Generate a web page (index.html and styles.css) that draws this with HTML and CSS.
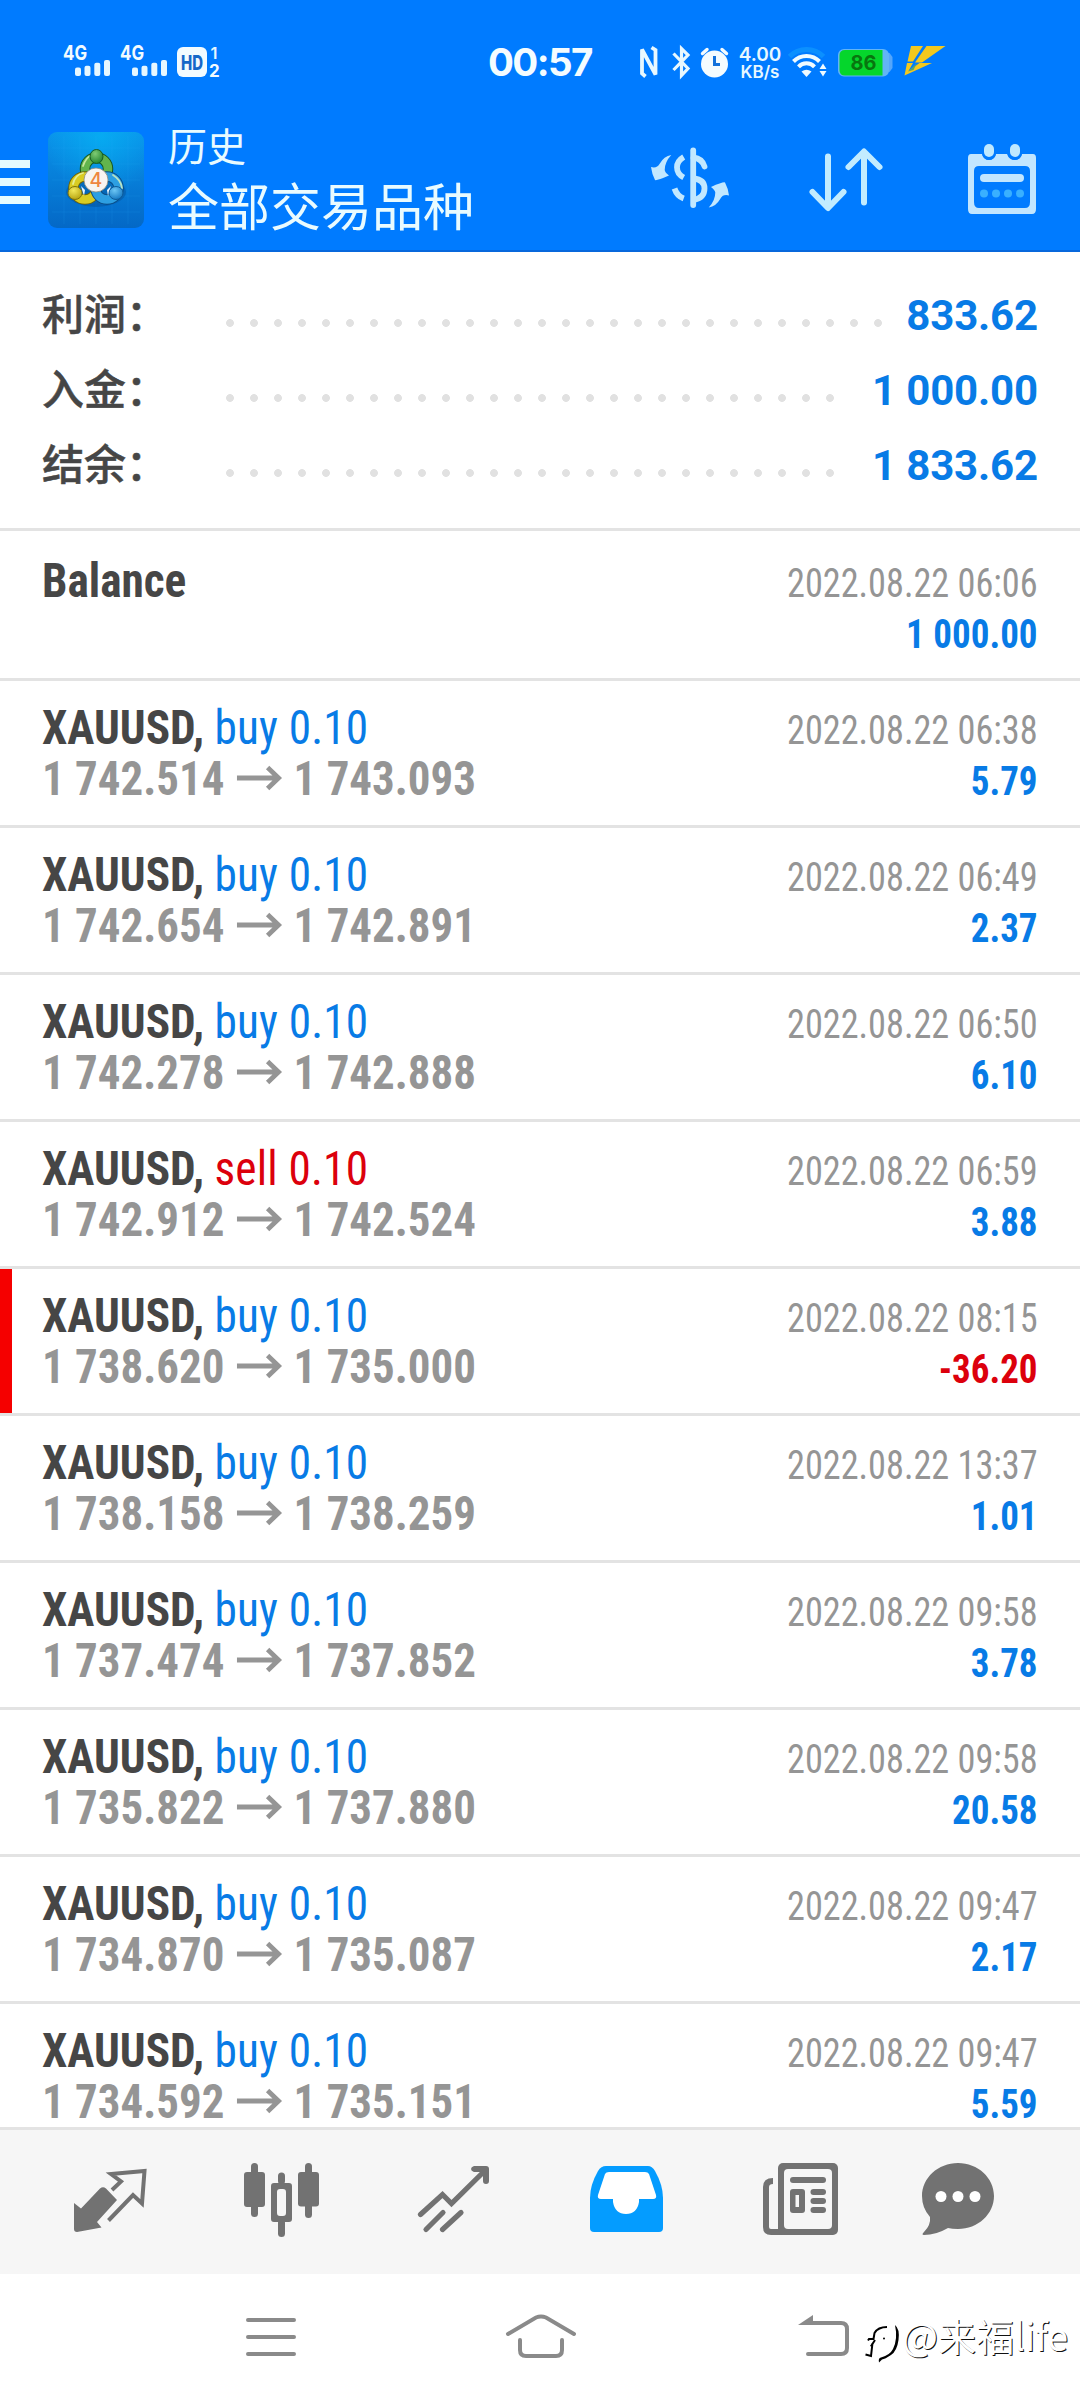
FILE: index.html
```html
<!DOCTYPE html>
<html lang="zh-CN">
<head>
<meta charset="utf-8">
<title>历史</title>
<link rel="stylesheet" href="styles.css">
</head>
<body>
<svg width="0" height="0" class="defs">
  <defs>
    <symbol id="arrow" viewBox="0 0 46 26" preserveAspectRatio="none"><path d="M0 13H43M31 2.500L42 13L31 23.500" fill="none" stroke="#959595" stroke-width="4.8"/></symbol>
    <symbol id="signal" viewBox="0 0 48 36">
      <text x="0" y="16" font-family="Inter, sans-serif" font-weight="700" font-size="20.5" textLength="24" lengthAdjust="spacingAndGlyphs" fill="#f2fbff">4G</text>
      <g fill="#e6f7ff"><rect x="12" y="23.5" width="6" height="8.5" rx="2"/><rect x="21.5" y="21.700" width="6" height="10.300" rx="2"/><rect x="31.300" y="18.700" width="6" height="13.300" rx="2"/><rect x="41" y="16" width="6" height="16" rx="2"/></g>
    </symbol>
    <linearGradient id="logoBg" x1="0" y1="0" x2="0" y2="1"><stop offset="0" stop-color="#0a93ea"/><stop offset="1" stop-color="#0468c6"/></linearGradient>
    <radialGradient id="logoGlow" cx=".55" cy=".05" r=".6"><stop offset="0" stop-color="#05b8f6" stop-opacity=".65"/><stop offset="1" stop-color="#05b8f6" stop-opacity="0"/></radialGradient>
    <radialGradient id="gGreen" cx=".4" cy=".3" r=".8"><stop offset="0" stop-color="#7fcb74"/><stop offset="1" stop-color="#187c28"/></radialGradient>
    <radialGradient id="gYellow" cx=".4" cy=".3" r=".8"><stop offset="0" stop-color="#f2e85a"/><stop offset="1" stop-color="#b09c08"/></radialGradient>
    <radialGradient id="gBlue" cx=".4" cy=".3" r=".8"><stop offset="0" stop-color="#6cc6f4"/><stop offset="1" stop-color="#0c70bd"/></radialGradient>
  </defs>
</svg>

<header class="top">
  <div class="status">
    <svg class="sig" viewBox="0 0 48 36"><use href="#signal"/></svg>
    <svg class="sig" viewBox="0 0 48 36"><use href="#signal"/></svg>
    <svg class="hd" viewBox="0 0 44 36">
      <rect x="0" y="3" width="30" height="30" rx="6" fill="#f2fbff"/>
      <text x="4" y="25.500" font-family="Inter, sans-serif" font-weight="800" font-size="19.500" textLength="22" lengthAdjust="spacingAndGlyphs" fill="#1668c8">HD</text>
      <text x="33.500" y="15" font-family="Inter, sans-serif" font-weight="600" font-size="16.500" fill="#e6f7ff">1</text>
      <text x="32" y="33" font-family="Inter, sans-serif" font-weight="700" font-size="17" fill="#f2fbff">2</text>
    </svg>
    <span class="clock">00:57</span>
    <svg class="nfc" viewBox="0 0 18 36"><path d="M5.500 32.500L2 29.500V5.500L15.500 30.500V6L11.500 3.500" fill="none" stroke="#e8f8ff" stroke-width="3.800"/></svg>
    <svg class="bt" viewBox="0 0 20 36"><path d="M1.500 9.500L16 24.500L9.500 31.500V4.500L16 11L1.500 26" fill="none" stroke="#e8f8ff" stroke-width="3.200"/></svg>
    <svg class="alarm" viewBox="0 0 30 36">
      <circle cx="14.500" cy="20" r="13.500" fill="#f4fcff"/>
      <path d="M2.500 9.500L7 5.500M26.500 9.500L22 5.500" stroke="#f4fcff" stroke-width="3.400" stroke-linecap="round"/>
      <path d="M14.500 12V20.500H20" fill="none" stroke="#1372dc" stroke-width="3"/>
    </svg>
    <div class="speed"><span>4.00</span><span>KB/s</span></div>
    <svg class="wifi" viewBox="0 0 40 36">
      <path d="M1.500 12.500A24 24 0 0 1 35.500 12.500" fill="none" stroke="#0b90ff" stroke-width="5"/>
      <path d="M5.500 17.500A18 18 0 0 1 31.500 17.500M10.500 22.800A11 11 0 0 1 26.500 22.800" fill="none" stroke="#f0fbff" stroke-width="4"/>
      <path d="M13.500 27.500Q18.500 24 23.500 27.500L18.500 33Z" fill="#f0fbff"/>
      <path d="M31.500 25L35 19.500L38.500 25ZM31.500 27H38.500L35 32.500Z" fill="#f0fbff"/>
    </svg>
    <svg class="batt" viewBox="0 0 56 36">
      <path d="M49 9H51.500L54.500 13V24L51.500 28H49Z" fill="#55a6fb"/>
      <rect x="0" y="5" width="51" height="27.500" rx="6" fill="#62b4f6"/>
      <path d="M7 6H44.500V31.500H7Q1.500 31.500 1.500 26V11.500Q1.500 6 7 6Z" fill="#05d62c"/>
      <text x="12.500" y="26" font-family="Inter, sans-serif" font-weight="700" font-size="20.500" textLength="26" lengthAdjust="spacingAndGlyphs" fill="#08760f">86</text>
    </svg>
    <svg class="flash" viewBox="0 0 42 36">
      <path d="M7 2H19L9 17.500H3.500ZM22.500 2H41.500L18 18.500H11ZM3 19H9L4.500 27L15.500 19H28L0.500 31.500Z" fill="#f3c81e"/>
      <path d="M13 19L4 27.500L9.500 26Z" fill="#58a56f"/>
    </svg>
  </div>
  <div class="appbar">
    <div class="burger"><i></i><i></i><i></i></div>
    <svg class="logo" viewBox="0 0 96 96">
      <rect width="96" height="96" rx="9" fill="url(#logoBg)"/><rect width="96" height="96" rx="9" fill="url(#logoGlow)"/>
      <path d="M16 4V92M32 4V92M48 4V92M64 4V92M80 4V92M4 16H92M4 32H92M4 48H92M4 64H92M4 80H92" stroke="#35b4f5" stroke-opacity=".13"/>
      <ellipse cx="48" cy="60" rx="30" ry="15" fill="#043b78" opacity=".3"/>
      <circle cx="48.500" cy="37" r="11.500" fill="none" stroke="#17551f" stroke-width="10.500"/>
      <circle cx="48.500" cy="37" r="11.500" fill="none" stroke="#62b44c" stroke-width="8.500"/>
      <circle cx="37" cy="56" r="11.500" fill="none" stroke="#6f6407" stroke-width="10.500"/>
      <circle cx="37" cy="56" r="11.500" fill="none" stroke="#d9cc22" stroke-width="8.500"/>
      <circle cx="59" cy="56" r="11.500" fill="none" stroke="#0b4c84" stroke-width="10.500"/>
      <circle cx="59" cy="56" r="11.500" fill="none" stroke="#2d9fe2" stroke-width="8.500"/>
      <path d="M35 34Q38 25 44 23M25 52Q27 43 35 41M65 43Q73 48 74 56" stroke="#e8f8b8" stroke-width="1.800" fill="none" stroke-linecap="round" opacity=".75"/>
      <path d="M33 54L37 58L36 64ZM63 54L59 58L60 64Z" fill="#e8f4ff"/>
      <ellipse cx="48.500" cy="24.500" rx="6.500" ry="7" fill="url(#gGreen)" stroke="#165c22"/>
      <ellipse cx="27" cy="61" rx="7" ry="6.500" fill="url(#gYellow)" stroke="#80730a"/>
      <ellipse cx="68" cy="61" rx="7" ry="6.500" fill="url(#gBlue)" stroke="#0f5c99"/>
      <circle cx="48" cy="48" r="12" fill="#f7f4f1" stroke="#8c8c80" stroke-width=".8"/>
      <text x="48" y="55" text-anchor="middle" font-family="Inter, sans-serif" font-weight="500" font-size="19.500" fill="#ee8640">4</text>
    </svg>
    <div class="titles"><div class="sub">历史</div><div class="title">全部交易品种</div></div>
    <svg class="currency" viewBox="650 146 80 66">
      <g fill="none" stroke="#c2e8ff" stroke-width="5.800">
        <path d="M683.700 157Q677 161 677 167.300Q677 174 683.700 177.500M674.500 188.500Q677 196 683.700 198.500"/>
        <path d="M693.500 157.500Q702 158.500 704.500 166.500" stroke-linecap="round"/>
        <path d="M693.500 178.500Q704.500 179.500 704.500 188.500Q704.500 198 693.500 200"/>
        <path d="M693.200 150.500V205" stroke-linecap="round"/>
      </g>
      <path id="swap" d="M671.300 155Q664 156 659.500 164Q657 168.500 651 167Q652 174.500 655 180Q656.500 181 669 175.500Q665 172.500 664.700 170Q664.700 162 671.300 155Z" fill="#c2e8ff"/>
      <use href="#swap" transform="rotate(180 690 181.200)"/>
    </svg>
    <svg class="sort" viewBox="808 146 76 68"><path d="M828 156.500V206M812.500 192L828 208L843.500 192M864 202.500V153M848.500 167L864 151.500L879.500 167" fill="none" stroke="#c2ecff" stroke-width="6" stroke-linecap="round" stroke-linejoin="round"/></svg>
    <svg class="cal" viewBox="966 142 72 74">
      <path fill-rule="evenodd" d="M971 154H982Q984 160 989 160Q994 160 996 154H1007Q1009 160 1015 160Q1020 160 1022 154H1033Q1036 154 1036 158V209Q1036 214 1032 214H972Q968 214 968 209V158Q968 154 971 154ZM979 166Q974 166 974 171V202Q974 208 979 208H1025Q1030 208 1030 202V171Q1030 166 1025 166Z" fill="#c2e6ff"/>
      <rect x="982" y="142" width="14" height="18" rx="7" fill="#007bff"/><rect x="1008" y="142" width="14" height="18" rx="7" fill="#007bff"/>
      <rect x="984" y="144" width="10" height="13" rx="5" fill="#bfe9ff"/><rect x="1010" y="144" width="10" height="13" rx="5" fill="#bfe9ff"/>
      <rect x="980" y="174" width="44" height="8" rx="4" fill="#c2e6ff"/>
      <g fill="#39b0ff"><circle cx="984" cy="193.500" r="4"/><circle cx="996" cy="193.500" r="4"/><circle cx="1008" cy="193.500" r="4"/><circle cx="1020" cy="193.500" r="4"/></g>
    </svg>
  </div>
</header>

<section class="summary">
  <div class="sum"><span class="label">利润：</span><span class="dots"></span><span class="total">833.62</span></div>
  <div class="sum"><span class="label">入金：</span><span class="dots"></span><span class="total">1 000.00</span></div>
  <div class="sum"><span class="label">结余：</span><span class="dots"></span><span class="total">1 833.62</span></div>
</section>

<main class="deals">
  <div class="deal first"><div class="left"><div class="sym">Balance</div></div><div class="right"><div class="date">2022.08.22 06:06</div><div class="pl">1 000.00</div></div></div>
  <div class="deal"><div class="left"><div class="sym">XAUUSD, <span class="buy">buy 0.10</span></div><div class="price">1 742.514<svg class="arr"><use href="#arrow"/></svg>1 743.093</div></div><div class="right"><div class="date">2022.08.22 06:38</div><div class="pl">5.79</div></div></div>
  <div class="deal"><div class="left"><div class="sym">XAUUSD, <span class="buy">buy 0.10</span></div><div class="price">1 742.654<svg class="arr"><use href="#arrow"/></svg>1 742.891</div></div><div class="right"><div class="date">2022.08.22 06:49</div><div class="pl">2.37</div></div></div>
  <div class="deal"><div class="left"><div class="sym">XAUUSD, <span class="buy">buy 0.10</span></div><div class="price">1 742.278<svg class="arr"><use href="#arrow"/></svg>1 742.888</div></div><div class="right"><div class="date">2022.08.22 06:50</div><div class="pl">6.10</div></div></div>
  <div class="deal"><div class="left"><div class="sym">XAUUSD, <span class="sell">sell 0.10</span></div><div class="price">1 742.912<svg class="arr"><use href="#arrow"/></svg>1 742.524</div></div><div class="right"><div class="date">2022.08.22 06:59</div><div class="pl">3.88</div></div></div>
  <div class="deal loss"><div class="left"><div class="sym">XAUUSD, <span class="buy">buy 0.10</span></div><div class="price">1 738.620<svg class="arr"><use href="#arrow"/></svg>1 735.000</div></div><div class="right"><div class="date">2022.08.22 08:15</div><div class="pl neg">-36.20</div></div></div>
  <div class="deal"><div class="left"><div class="sym">XAUUSD, <span class="buy">buy 0.10</span></div><div class="price">1 738.158<svg class="arr"><use href="#arrow"/></svg>1 738.259</div></div><div class="right"><div class="date">2022.08.22 13:37</div><div class="pl">1.01</div></div></div>
  <div class="deal"><div class="left"><div class="sym">XAUUSD, <span class="buy">buy 0.10</span></div><div class="price">1 737.474<svg class="arr"><use href="#arrow"/></svg>1 737.852</div></div><div class="right"><div class="date">2022.08.22 09:58</div><div class="pl">3.78</div></div></div>
  <div class="deal"><div class="left"><div class="sym">XAUUSD, <span class="buy">buy 0.10</span></div><div class="price">1 735.822<svg class="arr"><use href="#arrow"/></svg>1 737.880</div></div><div class="right"><div class="date">2022.08.22 09:58</div><div class="pl">20.58</div></div></div>
  <div class="deal"><div class="left"><div class="sym">XAUUSD, <span class="buy">buy 0.10</span></div><div class="price">1 734.870<svg class="arr"><use href="#arrow"/></svg>1 735.087</div></div><div class="right"><div class="date">2022.08.22 09:47</div><div class="pl">2.17</div></div></div>
  <div class="deal"><div class="left"><div class="sym">XAUUSD, <span class="buy">buy 0.10</span></div><div class="price">1 734.592<svg class="arr"><use href="#arrow"/></svg>1 735.151</div></div><div class="right"><div class="date">2022.08.22 09:47</div><div class="pl">5.59</div></div></div>
</main>

<nav class="tabs">
  <svg class="t1" viewBox="72 2160 76 80">
    <path d="M74 2203L81 2208.500L100 2188.500Q103 2186 106 2188.500L117 2200L97 2222L101.500 2227.500L77 2232Q74 2232 74 2229Z" fill="#727272"/>
    <path d="M112 2190L121 2181.500L111 2174L144.500 2171L142 2203.500L133 2195L108.500 2220.500" fill="none" stroke="#727272" stroke-width="4"/>
  </svg>
  <svg class="t2" viewBox="242 2160 80 80" fill="#727272">
    <rect x="251" y="2163" width="7" height="54" rx="3.500"/><rect x="244" y="2172" width="21" height="35" rx="3"/>
    <rect x="305" y="2163" width="7" height="55" rx="3.500"/><rect x="298" y="2172" width="21" height="34.500" rx="3"/>
    <rect x="278" y="2172.500" width="7" height="12" rx="3.500"/><rect x="278" y="2219" width="7" height="18" rx="3.500"/>
    <path fill-rule="evenodd" d="M274 2183H289Q292 2183 292 2186V2219Q292 2222 289 2222H274Q271 2222 271 2219V2186Q271 2183 274 2183ZM280 2189Q277 2189 277 2192V2213Q277 2216 280 2216H283Q286 2216 286 2213V2192Q286 2189 283 2189Z"/>
  </svg>
  <svg class="t3" viewBox="416 2160 76 76">
    <path d="M420.500 2214.500L442.500 2194.500L451.500 2203.500L486 2169.500M426 2229.500L443 2212.500M442.500 2229.500L461 2212.500" fill="none" stroke="#727272" stroke-width="5.200" stroke-linecap="round"/>
    <path d="M474 2166H486Q489 2166 489 2169V2181Q489 2184 486 2184Q483 2184 483 2181V2172H474Q471 2171 471 2169Q471 2167 474 2166Z" fill="#727272"/>
  </svg>
  <svg class="t4" viewBox="588 2160 78 78">
    <path d="M606 2166H648Q652 2166 655 2171Q663 2185 663 2198V2228Q663 2232 659 2232H594Q590 2232 590 2228V2198Q590 2185 598 2171Q601 2166 606 2166Z" fill="#049cff"/>
    <path d="M609 2172H645Q648 2172 649 2174L656 2195Q657 2199 653 2199H639V2202Q637 2214 626 2214Q615 2214 613 2202V2199H601Q597 2199 598 2195L605 2174Q606 2172 609 2172Z" fill="#fff"/>
  </svg>
  <svg class="t5" viewBox="760 2160 80 80">
    <path d="M783 2232H771Q766 2232 766 2227V2187Q766 2181 773 2181" fill="none" stroke="#727272" stroke-width="6"/>
    <rect x="778" y="2163" width="60" height="72" rx="5" fill="#727272"/><rect x="784" y="2169" width="48" height="60" rx="4" fill="#f6f6f6"/>
    <rect x="790" y="2177" width="36" height="6" rx="3" fill="#727272"/><rect x="790" y="2189" width="15" height="24" rx="3" fill="#727272"/><rect x="795.500" y="2195" width="3.500" height="12" fill="#f6f6f6"/>
    <rect x="810.500" y="2189" width="15.500" height="6" rx="3" fill="#727272"/><rect x="810.500" y="2198" width="15.500" height="6" rx="3" fill="#727272"/><rect x="810.500" y="2207" width="15.500" height="6" rx="3" fill="#727272"/>
  </svg>
  <svg class="t6" viewBox="920 2160 76 78">
    <path d="M958 2163C978 2163 994 2178 994 2196C994 2214 978 2229 958 2229Q952 2229 948 2228Q936 2235 924 2235Q921 2235 924 2232Q931 2225 930 2217Q922 2208 922 2196C922 2178 938 2163 958 2163Z" fill="#727272"/>
    <g fill="#fff"><circle cx="941" cy="2196.500" r="5.500"/><circle cx="958" cy="2196.500" r="5.500"/><circle cx="975" cy="2196.500" r="5.500"/></g>
  </svg>
</nav>

<footer class="sysnav">
  <svg class="n1" viewBox="244 2312 54 48"><path d="M248 2320H294M248 2337H294M248 2354H294" stroke="#8a8a8a" stroke-width="4" stroke-linecap="round"/></svg>
  <svg class="n2" viewBox="504 2312 74 48"><path d="M508 2334L536 2317.500Q541 2315.500 546 2317.500L574 2334M520 2340V2350Q520 2356 526 2356H556Q562 2356 562 2350V2340" fill="none" stroke="#8a8a8a" stroke-width="4" stroke-linecap="round"/></svg>
  <svg class="n3" viewBox="796 2312 56 48"><path d="M808 2323H841Q847 2323 847 2329V2348Q847 2354 841 2354H808" fill="none" stroke="#8a8a8a" stroke-width="4" stroke-linecap="round"/><path d="M798 2325L813 2315V2325Z" fill="#8a8a8a"/></svg>
  <div class="mark">
    <svg viewBox="864 2322 38 44">
      <path d="M868 2341.500L869 2340H873.500L874.500 2334Q878 2328 887 2328M875 2341L871.500 2346.500L873 2347M872.500 2344L871 2357L865.500 2355.500" fill="none" stroke="#000" stroke-width="2"/>
      <path d="M895 2326Q900 2330 898.500 2341Q897 2352 891 2356Q885 2360 882 2360.500L879 2363.500Q878 2359 881 2358.500Q890 2356 893 2350Q898 2340 895 2326Z"/><circle cx="884" cy="2339.500" r="1"/>
    </svg>
    <span>@来福life</span>
  </div>
</footer>
</body>
</html>
```
FILE: styles.css
```css
* { box-sizing: border-box; }
body { margin: 0; width: 1080px; height: 2400px; overflow: hidden; background: #fff; display: flex; flex-direction: column; font-family: Roboto, "Noto Sans CJK SC", sans-serif; position: relative; }
svg { display: block; flex: none; }
.defs { position: absolute; }

.top { height: 252px; background: #007bff; border-bottom: 2px solid #0868dc; flex: none; }
.status { height: 116px; padding: 44px 0 0 63px; display: flex; align-items: flex-start; }
.status svg { height: 36px; }
.sig { width: 48px; margin-right: 9px; }
.hd { width: 44px; }
.clock { width: 111px; margin-left: 267px; font: 700 38.5px/36px Inter, sans-serif; letter-spacing: -1.6px; color: #f4fcff; white-space: nowrap; }
.nfc { width: 18px; margin-left: 41px; }
.bt { width: 20px; margin-left: 14px; }
.alarm { width: 30px; margin-left: 8px; }
.speed { width: 44px; margin-left: 8px; display: flex; flex-direction: column; font: 600 19px/17px Inter, sans-serif; color: #e8f8ff; padding-top: 2px; align-items: center; white-space: nowrap; }
.speed span + span { font-size: 17px; line-height: 18px; }
.wifi { width: 40px; margin-left: 6px; }
.batt { width: 56px; margin-left: 10px; }
.flash { width: 42px; margin-left: 10px; }

.appbar { height: 134px; display: flex; align-items: flex-start; }
.burger { width: 30px; padding-top: 44px; display: flex; flex-direction: column; gap: 10px; }
.burger i { height: 8px; background: #e4fbff; }
.logo { width: 96px; height: 96px; margin: 16px 0 0 18px; }
.titles { margin-left: 24px; width: 480px; color: #e9fbff; font-family: "Noto Sans CJK SC", sans-serif; }
.sub { font-size: 39px; line-height: 50px; padding-top: 3px; }
.title { font-size: 51px; line-height: 70px; }
.currency { width: 80px; height: 66px; margin: 30px 0 0 2px; }
.sort { width: 76px; height: 68px; margin: 30px 0 0 78px; }
.cal { width: 72px; height: 74px; margin: 26px 0 0 82px; }

.summary { height: 279px; padding: 25px 42px 0; border-bottom: 3px solid #e3e3e3; flex: none; }
.sum { height: 75px; display: flex; align-items: center; }
.label { width: 176px; padding-bottom: 6px; font: 500 42px/69px "Noto Sans CJK SC", sans-serif; color: #464646; -webkit-text-stroke: 0.5px #464646; }
.dots { flex: 1; height: 8px; margin: 16px 24px 0 0; background: radial-gradient(circle at 12px 4px, #e1e1e1 3.5px, transparent 4.3px) 0 0 / 24px 8px repeat-x; }
.total { padding-top: 2px; font: 700 42px/73px Roboto, sans-serif; letter-spacing: -0.15px; color: #087be6; }

.deals { flex: 1; min-height: 0; overflow: hidden; }
.deal { height: 147px; border-bottom: 3px solid #e3e3e3; padding: 21px 42px 0; display: flex; justify-content: space-between; font-family: "Roboto Condensed", Roboto, sans-serif; position: relative; white-space: nowrap; }
.deal.first { height: 150px; padding-top: 24px; }
.deal.loss::before { content: ""; position: absolute; left: 0; top: 0; width: 12px; height: 144px; background: #f50000; }
.sym, .price { transform-origin: 0 50%; }
.sym { font-size: 48px; line-height: 52px; font-weight: 700; color: #464646; transform: scaleX(0.943); }
.buy, .sell { font-weight: 400; letter-spacing: 0.2px; color: #087be6; }
.sell { color: #dc000c; }
.price { font-size: 48px; line-height: 49px; font-weight: 700; color: #959595; display: flex; align-items: center; transform: scaleX(0.936); }
.arr { width: 49px; height: 26px; margin: 0 12px 2px 13px; }
.right { text-align: right; }
.date, .pl { transform-origin: 100% 50%; }
.date { font-size: 40px; line-height: 58px; color: #959595; transform: scaleX(0.906); }
.pl { font-size: 40px; line-height: 44px; font-weight: 700; color: #087be6; transform: scaleX(0.925); }
.pl.neg { color: #dc000c; }

.tabs { height: 147px; flex: none; border-top: 3px solid #e3e3e3; background: #f6f6f6; display: flex; padding: 30px 0 0 72px; }
.t1 { width: 76px; height: 80px; }
.t2 { width: 80px; height: 80px; margin-left: 94px; }
.t3 { width: 76px; height: 76px; margin-left: 94px; }
.t4 { width: 78px; height: 78px; margin-left: 96px; }
.t5 { width: 80px; height: 80px; margin-left: 94px; }
.t6 { width: 76px; height: 78px; margin-left: 80px; }

.sysnav { height: 126px; flex: none; background: #fff; display: flex; padding: 38px 0 0 244px; }
.sysnav > svg { height: 48px; }
.n1 { width: 54px; }
.n2 { width: 74px; margin-left: 206px; }
.n3 { width: 56px; margin-left: 218px; }
.mark { position: absolute; left: 864px; top: 2310px; display: flex; align-items: center; height: 50px; white-space: nowrap; font: 400 38px/50px "Noto Sans CJK SC", sans-serif; color: #fff; text-shadow: 1px 1px 0.5px #111; }
.mark svg { width: 38px; height: 44px; margin: 16px 0 0 0; }
```
